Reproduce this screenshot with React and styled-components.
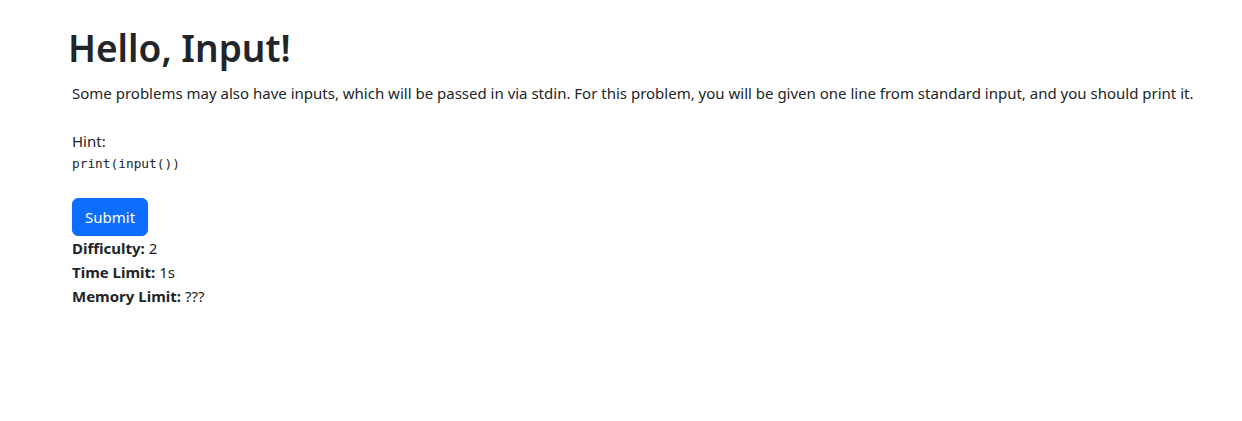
import { createGlobalStyle, styled } from 'styled-components'

const GlobalStyle = createGlobalStyle`
  * {
    box-sizing: border-box;
  }

  body {
    margin: 0;
    background: #fff;
    color: #212529;
    font-family: 'Noto Sans', 'Open Sans', sans-serif;
    font-size: 15px;
    line-height: 24px;
  }
`

const problem = {
  title: 'Hello, Input!',
  description:
    'Some problems may also have inputs, which will be passed in via stdin. For this problem, you will be given one line from standard input, and you should print it.',
  hint: 'print(input())',
  stats: [
    { label: 'Difficulty:', value: '2' },
    { label: 'Time Limit:', value: '1s' },
    { label: 'Memory Limit:', value: '???' },
  ],
}

const App = () => {
  return (
    <>
      <GlobalStyle />
      <Page>
        <Title>{problem.title}</Title>
        <Body>
          <Description>{problem.description}</Description>
          <HintLabel>Hint:</HintLabel>
          <Code>{problem.hint}</Code>
          <SubmitButton type="button">Submit</SubmitButton>
          <Stats>
            {problem.stats.map((stat) => (
              <StatRow key={stat.label}>
                <strong>{stat.label}</strong> {stat.value}
              </StatRow>
            ))}
          </Stats>
        </Body>
      </Page>
    </>
  )
}

export default App

const Page = styled.main`
  padding: 24px 0 0 68px;
`

const Title = styled.h1`
  margin: 0 0 9px;
  font-size: 37px;
  font-weight: 600;
  line-height: 48px;
`

const Body = styled.div`
  padding-left: 4px;
`

const Description = styled.p`
  margin: 0 0 24px;
`

const HintLabel = styled.div``

const Code = styled.pre`
  margin: 0 0 24px;
  font-family: 'DejaVu Sans Mono', 'Liberation Mono', monospace;
  font-size: 12.8px;
  line-height: 21px;
`

const SubmitButton = styled.button`
  display: block;
  height: 38px;
  padding: 6px 12px;
  border: 1px solid #0d6efd;
  border-radius: 6px;
  background: #0d6efd;
  color: #fff;
  font-family: inherit;
  font-size: 15px;
  line-height: 24px;
  cursor: pointer;
`

const Stats = styled.div``

const StatRow = styled.div`
  strong {
    font-weight: 700;
  }
`
